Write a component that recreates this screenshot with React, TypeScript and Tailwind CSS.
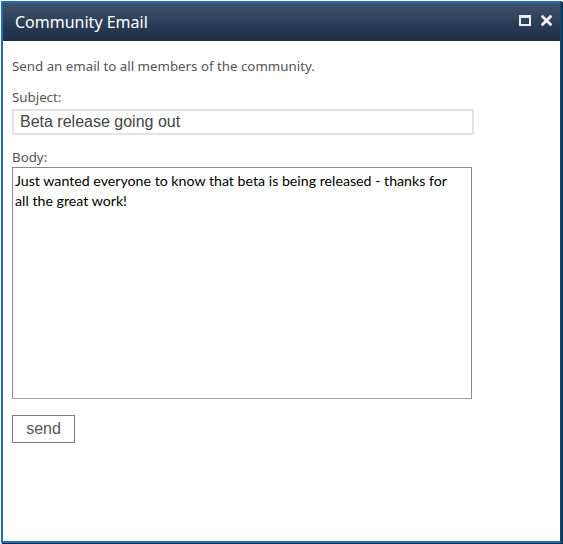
import { useState } from "react";

export default function App() {
  const [subject, setSubject] = useState("Beta release going out");
  const [body, setBody] = useState(
    "Just wanted everyone to know that beta is being released - thanks for all the great work!"
  );

  return (
    <div className="h-[544px] w-[563px] bg-white p-px">
      <div className="flex h-[542px] w-[561px] flex-col border-2 border-[#1e6fb3] border-r-[#12466f] shadow-[1px_1px_0_#0b2a44]">
        {/* Title bar */}
        <div className="flex h-[38px] shrink-0 items-center justify-between bg-gradient-to-b from-[#3e536c] to-[#1c2d45] pl-3 pr-2">
          <span className="text-[16px] text-white [font-family:'Noto_Sans',sans-serif]">Community Email</span>
          <div className="flex items-center gap-[10px] pb-[3px]">
            <span className="block h-[11px] w-[12px] border-2 border-t-[3px] border-[#e8eef5]" />
            <svg viewBox="0 0 10 10" className="h-[11px] w-[11px]">
              <path d="M1.5 1.5 L8.5 8.5 M8.5 1.5 L1.5 8.5" stroke="#eef2f7" strokeWidth="2.6" strokeLinecap="square" />
            </svg>
          </div>
        </div>

        {/* Form */}
        <div className="flex flex-1 flex-col pl-[9px] pt-[16px] text-[13.3px] text-[#555] [font-family:'Noto_Sans',sans-serif]">
          <p className="leading-[18px]">Send an email to all members of the community.</p>

          <label className="mt-[13px] leading-[18px]">Subject:</label>
          <input
            value={subject}
            onChange={(e) => setSubject(e.target.value)}
            className="mt-[3px] h-[26px] w-[462px] border-2 border-[#e3e3e3] px-[6px] text-[16px] text-[#444] outline-none [font-family:'Liberation_Sans',Arial,sans-serif]"
          />

          <label className="mt-[13px] leading-[18px]">Body:</label>
          <textarea
            value={body}
            onChange={(e) => setBody(e.target.value)}
            className="mt-px h-[232px] w-[460px] resize-none border border-[#8a8a8a] border-b-[#a0a0a0] pl-[2px] pr-[16px] py-[3px] text-[14.2px] leading-[20px] text-black outline-none [font-family:'Lato',sans-serif]"
          />

          <button className="mt-[16px] h-[28px] w-[63px] border border-[#7a7a7a] text-[16px] text-[#555] [font-family:'Liberation_Sans',Arial,sans-serif]">
            send
          </button>
        </div>
      </div>
    </div>
  );
}
